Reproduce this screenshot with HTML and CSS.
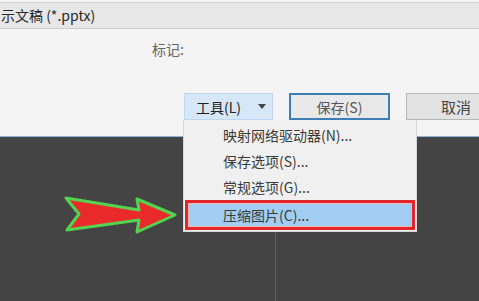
FILE: index.html
```html
<!DOCTYPE html>
<html lang="zh-CN">
<head>
	<meta charset="UTF-8">
	<title>另存为</title>
	<link rel="stylesheet" href="styles.css">
</head>
<body>
<div class="screen">
	<!-- 保存对话框下半部分 -->
	<div class="dialog">
		<div class="filetype">示文稿 (*.pptx)</div>
		<div class="tags">标记:</div>
		<div class="actions">
			<a href="#" class="btn tools">工具(L)<i class="caret"></i></a>
			<a href="#" class="btn save">保存(S)</a>
			<a href="#" class="btn cancel">取消</a>
		</div>
	</div>
	<div class="workspace">
		<div class="pane"></div>
		<div class="pane split"></div>
	</div>

	<!-- 工具下拉菜单 -->
	<ul class="menu">
		<li>映射网络驱动器(N)...</li>
		<li>保存选项(S)...</li>
		<li>常规选项(G)...</li>
		<li class="on">压缩图片(C)...</li>
	</ul>

	<svg class="pointer" width="124" height="44" viewBox="60 193 124 44">
		<polygon points="66,198 139,210 137,199 175,215 137,232 139,220 67,230 79,214" />
	</svg>
</div>
</body>
</html>
```

FILE: styles.css
```css
body,ul,li{margin: 0;padding: 0;list-style: none;}
body{font-family: "Noto Sans CJK SC", "Liberation Sans", sans-serif;font-size: 14px;color: #333;background: #444;}
a{text-decoration: none;color: inherit;}

.screen{position: relative;width: 479px;height: 301px;overflow: hidden;}

.dialog{background: #f4f4f4;padding-top: 2px;padding-bottom: 16px;}
.filetype{height: 27px;line-height: 25px;background: #e7e7e7;border-top: 1px solid #d4d4d4;border-bottom: 1px solid #cdcdcd;box-sizing: border-box;padding-left: 1px;color: #2a2a2a;}
.tags{margin-top: 11px;padding-left: 152px;height: 18px;line-height: 18px;color: #666;}
.actions{display: flex;gap: 16px;margin-top: 35px;padding-left: 184px;}
.btn{display: flex;align-items: center;justify-content: center;flex: none;height: 27px;box-sizing: border-box;border: 1px solid #b6b6b6;background: #e3e3e3;color: #444;white-space: nowrap;}
.btn.tools{width: 89px;justify-content: flex-start;padding-left: 11px;background: #d6e7f7;border-color: #c0d8ef;color: #222;}
.btn.save{width: 101px;border: 2px solid #3f7db5;background: #e9e9e9;color: #555;}
.btn.cancel{width: 100px;justify-content: flex-start;padding-left: 34px;font-size: 15px;}
.caret{margin-left: auto;margin-right: 6px;width: 0;height: 0;border-left: 4px solid transparent;border-right: 4px solid transparent;border-top: 5px solid #444;}

.workspace{display: grid;grid-template-columns: 275px 1fr;height: 165px;border-top: 1px solid #8fb3d6;}
.pane.split{border-left: 1px solid #5e5e5e;}

.menu{position: absolute;left: 183px;top: 120px;width: 234px;padding-top: 2px;padding-bottom: 1px;background: #f0f0f0;border: 1px solid #d6d6d6;border-top: none;box-sizing: border-box;}
.menu li{height: 26px;line-height: 26px;padding-left: 39px;color: #3a3a3a;}
.menu li.on{height: 30px;line-height: 24px;margin: 0 1px;padding-left: 35px;background: #a2cef4;border: 3px solid #e1262c;box-shadow: inset 0 0 0 1px #f3b7b7;box-sizing: border-box;}

.pointer{position: absolute;left: 60px;top: 193px;}
.pointer polygon{fill: #ea2a2a;stroke: #53d34f;stroke-width: 3;stroke-linejoin: round;}
```
